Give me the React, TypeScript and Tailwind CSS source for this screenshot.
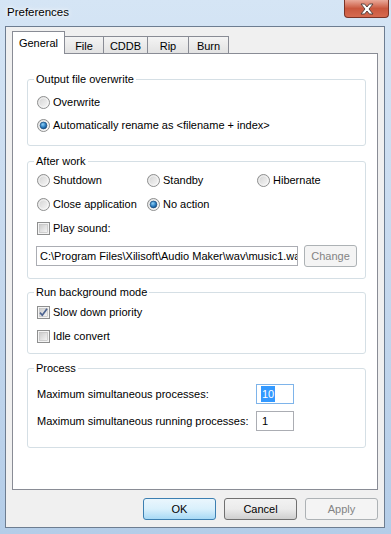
import React from "react";

function Radio({ checked }: { checked?: boolean }) {
  return (
    <svg width="13" height="13" viewBox="0 0 13 13" className="shrink-0">
      <defs>
        <linearGradient id="radioBg" x1="0" y1="0" x2="1" y2="1">
          <stop offset="0" stopColor="#cfcfcf" />
          <stop offset="1" stopColor="#fbfbfb" />
        </linearGradient>
        <radialGradient id="radioDot" cx="0.4" cy="0.35" r="0.75">
          <stop offset="0" stopColor="#8fd0f6" />
          <stop offset="0.55" stopColor="#2a7cc0" />
          <stop offset="1" stopColor="#0f3e72" />
        </radialGradient>
      </defs>
      <circle cx="6.5" cy="6.5" r="6" fill="url(#radioBg)" stroke="#8e8f8f" />
      <circle cx="6.5" cy="6.5" r="4.6" fill="none" stroke="#f7f7f7" strokeWidth="0.8" />
      {checked && (
        <circle cx="6.5" cy="6.5" r="3.4" fill="url(#radioDot)" stroke="#1d4f80" strokeWidth="0.7" />
      )}
    </svg>
  );
}

function Check({ checked }: { checked?: boolean }) {
  return (
    <svg width="13" height="13" viewBox="0 0 13 13" className="shrink-0">
      <defs>
        <linearGradient id="checkBg" x1="0" y1="0" x2="1" y2="1">
          <stop offset="0" stopColor="#cbcbcb" />
          <stop offset="1" stopColor="#f6f6f6" />
        </linearGradient>
      </defs>
      <rect x="0.5" y="0.5" width="12" height="12" fill="#f4f4f4" stroke="#8e8f8f" />
      <rect x="2.5" y="2.5" width="8" height="8" fill="url(#checkBg)" stroke="#b9b9b9" strokeWidth="0.6" />
      {checked && (
        <path d="M3 6.6 L5.3 9.2 L10 2.8" fill="none" stroke="#4c6390" strokeWidth="1.7" />
      )}
    </svg>
  );
}

function Option({ label, type, checked }: { label: string; type: "radio" | "check"; checked?: boolean }) {
  return (
    <div className="flex h-[16px] items-center gap-[3px] whitespace-nowrap">
      {type === "radio" ? <Radio checked={checked} /> : <Check checked={checked} />}
      <span>{label}</span>
    </div>
  );
}

function Group({ title, className, children }: { title: string; className: string; children: React.ReactNode }) {
  return (
    <fieldset className={`ml-[14px] mr-[11px] min-w-0 rounded-[3px] border border-[#d5dfe5] pl-[9px] pr-[8px] ${className}`}>
      <legend className="-ml-[3px] px-[2px] leading-[15px]">{title}</legend>
      {children}
    </fieldset>
  );
}

function Button({ label, kind, w = "w-[73px]" }: { label: string; kind: "default" | "normal" | "disabled"; w?: string }) {
  const styles = {
    default: "border-[#3c7fb1] bg-gradient-to-b from-[#eaf6fd] via-[#d9f0fc] to-[#a7d9f5] text-black",
    normal: "border-[#707070] bg-gradient-to-b from-[#f2f2f2] via-[#ebebeb] to-[#cfcfcf] text-black",
    disabled: "border-[#adb2b5] bg-[#f4f4f4] text-[#838383]",
  };
  return (
    <div className={`flex h-[22px] ${w} shrink-0 items-center justify-center rounded-[3px] border ${styles[kind]}`}>
      {label}
    </div>
  );
}

export default function App() {
  const tabs = [
    { label: "File", w: "w-[40px]" },
    { label: "CDDB", w: "w-[45px]" },
    { label: "Rip", w: "w-[42px]" },
    { label: "Burn", w: "w-[41px]" },
  ];

  return (
    <div className="flex h-[534px] w-[391px] flex-col bg-gradient-to-b from-[#d5e5f5] via-[#c6d9ee] to-[#b4cde8] font-['Liberation_Sans',Arial,sans-serif] text-[11px] text-black">
      {/* title bar */}
      <div className="flex h-[26px] items-start justify-between">
        <span className="pl-[7px] pt-[5px] text-[11.5px] leading-[15px] [text-shadow:0_0_6px_#ffffff,0_0_3px_#ffffff]">
          Preferences
        </span>
        <div className="mr-[2px] flex h-[18px] w-[45px] items-center justify-center rounded-b-[4px] border border-t-0 border-[#7a3326] bg-gradient-to-b from-[#e9a99a] via-[#c9573e] to-[#d66a4f]">
          <svg width="14" height="12" viewBox="0 0 14 12">
            <path
              d="M1 1 H4.6 L7 4 L9.4 1 H13 L9 6 L13 11 H9.4 L7 8 L4.6 11 H1 L5 6 Z"
              fill="#ffffff"
              stroke="#4a3a38"
              strokeWidth="0.9"
              strokeLinejoin="round"
            />
          </svg>
        </div>
      </div>

      {/* client */}
      <div className="ml-[5px] flex h-[502px] w-[380px] flex-col border border-[#6d7d91] bg-[#f0f0f0] px-[6px] pt-[4px]">
        {/* tabs */}
        <div className="flex items-end">
          <div className="relative z-10 -mb-px flex h-[23px] w-[53px] justify-center border border-b-0 border-[#898c95] bg-white pt-[4px] leading-[15px]">
            General
          </div>
          {tabs.map((t) => (
            <div
              key={t.label}
              className={`-ml-px flex h-[17px] ${t.w} justify-center border border-b-0 border-[#898c95] bg-gradient-to-b from-[#f4f4f4] to-[#e2e2e2] pt-[2px] leading-[15px]`}
            >
              {t.label}
            </div>
          ))}
        </div>

        {/* panel */}
        <div className="flex h-[437px] w-[366px] flex-col border border-[#898c95] bg-white">
          <Group title="Output file overwrite" className="mt-[18px] pb-[12px] pt-[7px]">
            <div className="flex flex-col gap-[7px]">
              <Option type="radio" label="Overwrite" />
              <Option type="radio" label="Automatically rename as <filename + index>" checked />
            </div>
          </Group>

          <Group title="After work" className="mt-[8px] pb-[11px] pt-[3px]">
            <div className="grid grid-cols-[110px_110px_1fr] gap-y-[8px]">
              <Option type="radio" label="Shutdown" />
              <Option type="radio" label="Standby" />
              <Option type="radio" label="Hibernate" />
              <Option type="radio" label="Close application" />
              <Option type="radio" label="No action" checked />
            </div>
            <div className="mt-[8px]">
              <Option type="check" label="Play sound:" />
            </div>
            <div className="-ml-px mt-[9px] flex items-center gap-[6px]">
              <div className="flex h-[20px] w-[262px] items-center overflow-hidden whitespace-nowrap border border-[#abadb3] pl-[3px]">
                C:\Program Files\Xilisoft\Audio Maker\wav\music1.wav
              </div>
              <Button label="Change" kind="disabled" w="w-[53px]" />
            </div>
          </Group>

          <Group title="Run background mode" className="mt-[6px] pb-[9px] pt-[4px]">
            <div className="flex flex-col gap-[8px]">
              <Option type="check" label="Slow down priority" checked />
              <Option type="check" label="Idle convert" />
            </div>
          </Group>

          <Group title="Process" className="mt-[7px] pb-[16px] pt-[8px]">
            <div className="grid grid-cols-[219px_38px] items-center gap-y-[7px]">
              <span className="whitespace-nowrap">Maximum simultaneous processes:</span>
              <div className="flex h-[20px] items-center border border-[#7eb4ea] pl-[4px]">
                <span className="bg-[#3399ff] px-px text-white">10</span>
              </div>
              <span className="whitespace-nowrap">Maximum simultaneous running processes:</span>
              <div className="flex h-[20px] items-center border border-[#abadb3] pl-[5px]">1</div>
            </div>
          </Group>
        </div>

        {/* buttons */}
        <div className="mt-[8px] flex w-[366px] justify-end gap-[8px]">
          <Button label="OK" kind="default" />
          <Button label="Cancel" kind="normal" />
          <Button label="Apply" kind="disabled" />
        </div>
      </div>
    </div>
  );
}
